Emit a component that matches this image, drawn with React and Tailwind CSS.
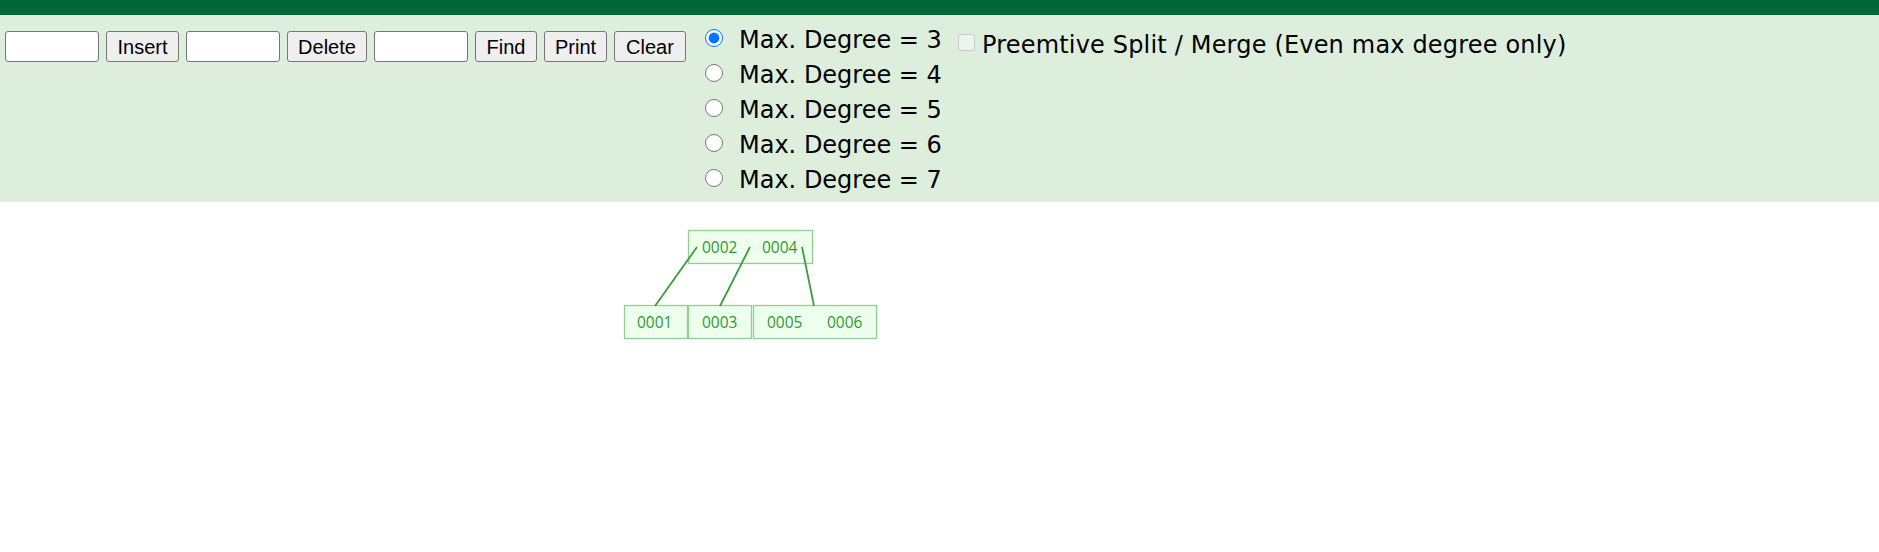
import React from 'react';

const degrees = [3, 4, 5, 6, 7];

const buttonClass =
  "h-[31px] rounded-[3px] border border-[#767676] bg-[#efefef] text-[20px] leading-none text-black";
const inputClass =
  "h-[31px] w-[94px] rounded-[3px] border border-[#767676] bg-white px-1 text-[20px]";

const BTree = () => {
  // node boxes, coordinates relative to the canvas area
  const nodes = [
    { x: 688, y: 28, w: 124, keys: [["0002", 702], ["0004", 762]] },
    { x: 624, y: 103, w: 63, keys: [["0001", 637]] },
    { x: 688, y: 103, w: 63, keys: [["0003", 702]] },
    { x: 753, y: 103, w: 123, keys: [["0005", 767], ["0006", 827]] },
  ];
  const edges = [
    [697, 45, 655, 104],
    [750, 45, 720, 104],
    [802, 45, 814, 104],
  ];
  return (
    <svg width="1879" height="350" className="block">
      {nodes.map((n, i) => (
        <g key={i}>
          <rect
            x={n.x + 0.5}
            y={n.y + 0.5}
            width={n.w}
            height={33}
            fill="#eeffee"
            stroke="#8fd08f"
            strokeWidth="1.3"
          />
          {n.keys.map(([k, tx]) => (
            <text
              key={k}
              x={tx}
              y={n.y + 22.5}
              fontFamily="'Open Sans', sans-serif"
              fontSize="15.5"
              fill="#2f9a2f"
            >
              {k}
            </text>
          ))}
        </g>
      ))}
      {edges.map(([x1, y1, x2, y2], i) => (
        <line key={i} x1={x1} y1={y1} x2={x2} y2={y2} stroke="#3d9a3d" strokeWidth="1.8" />
      ))}
    </svg>
  );
};

export default function App() {
  return (
    <div className="w-[1879px] h-[552px] bg-white overflow-hidden">
      <div className="h-[15px] bg-[#006837]" />

      <div className="h-[187px] bg-[#ddeedd] flex items-start">
        {/* Insert / delete / find controls */}
        <div
          className="flex items-center gap-[7px] pl-[5px] pt-[16px]"
          style={{ fontFamily: "'Liberation Sans', Arial, sans-serif" }}
        >
          <input type="text" className={inputClass} />
          <button className={`${buttonClass} w-[73px]`}>Insert</button>
          <input type="text" className={inputClass} />
          <button className={`${buttonClass} w-[80px]`}>Delete</button>
          <input type="text" className={inputClass} />
          <button className={`${buttonClass} w-[62px]`}>Find</button>
          <button className={`${buttonClass} w-[63px]`}>Print</button>
          <button className={`${buttonClass} w-[72px]`}>Clear</button>
        </div>

        {/* Max degree radios */}
        <div
          className="ml-[19px] w-[253px] pt-[7px] flex flex-col"
          style={{ fontFamily: "'DejaVu Sans', Verdana, sans-serif" }}
        >
          {degrees.map(d => (
            <label key={d} className="h-[35px] flex items-center">
              <input
                type="radio"
                name="degree"
                defaultChecked={d === 3}
                className="m-0 w-[18px] h-[18px] -translate-y-[2px] accent-[#0075ff]"
              />
              <span className="ml-4 text-[24px] leading-[28px] text-black whitespace-nowrap">
                Max. Degree = {d}
              </span>
            </label>
          ))}
        </div>

        {/* Preemptive split checkbox */}
        <label
          className="pt-[16px] flex items-start"
          style={{ fontFamily: "'DejaVu Sans', Verdana, sans-serif" }}
        >
          <input type="checkbox" disabled className="m-0 mt-[3px] w-[17px] h-[17px]" />
          <span className="ml-[7px] text-[24px] leading-[28px] tracking-[0.18px] text-black whitespace-nowrap">
            Preemtive Split / Merge (Even max degree only)
          </span>
        </label>
      </div>

      <BTree />
    </div>
  );
}
